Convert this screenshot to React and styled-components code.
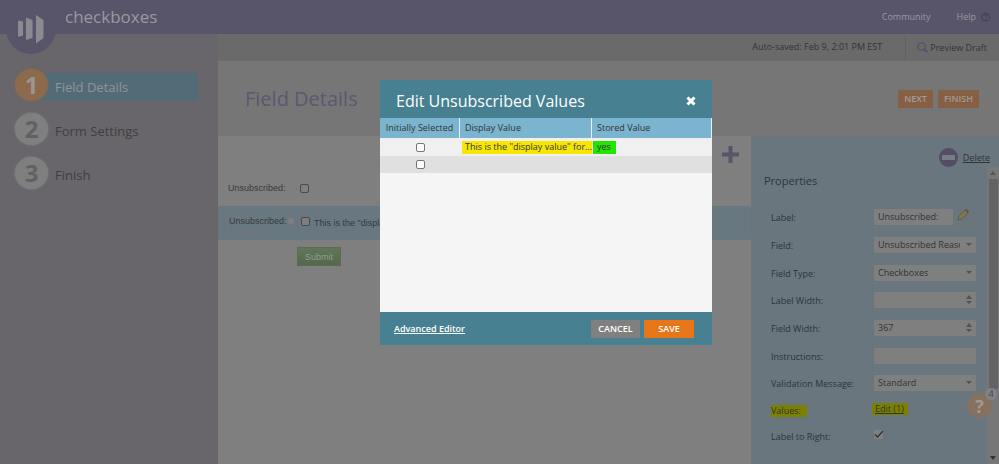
import React from "react";
import styled, { createGlobalStyle } from "styled-components";

const sans = '"Open Sans", "Noto Sans", sans-serif';
const arial = '"Liberation Sans", Arial, sans-serif';

const GlobalStyle = createGlobalStyle`
  *, *::before, *::after { box-sizing: border-box; }
  body { margin: 0; background: #7f7f80; font: 11px/16px ${sans}; color: #38393b; }
  button, input, select { font: inherit; color: inherit; margin: 0; border: 0; padding: 0; border-radius: 0; }
  a { color: inherit; }
  svg { display: block; flex: none; }
  h1, h2, h3, ol { margin: 0; padding: 0; font-weight: 400; list-style: none; }
`;

const Page = styled.div`
  position: relative;
  min-height: 100vh;
  display: flex;
  flex-direction: column;
  overflow: hidden;
`;

const TopBar = styled.header`
  position: relative;
  display: flex;
  align-items: center;
  height: 34px;
  padding: 0 9px 0 65px;
  background: #58546a;
  color: #9a99a0;
`;

const Logo = styled.svg`
  position: absolute;
  left: 6px;
  top: 0;
`;

const AppTitle = styled.h1`
  flex: 1;
  font-size: 17px;
  line-height: 32px;
`;

const TopLink = styled.a`
  display: flex;
  align-items: center;
  gap: 5px;
  margin-left: 26px;
  font-size: 9px;
  text-decoration: none;
`;

const Columns = styled.div`
  flex: 1;
  display: flex;
`;

const Sidebar = styled.nav`
  flex: 0 0 218px;
  padding: 35px 20px 0 15px;
  background: #68666a;
`;

const Steps = styled.ol`
  display: grid;
  gap: 12px;
`;

const Step = styled.li`
  display: flex;
  height: 32px;
  align-items: flex-end;
`;

const StepNumber = styled.span`
  z-index: 1;
  flex: none;
  width: 33px;
  height: 32px;
  border-radius: 50%;
  text-align: center;
  font-size: 24px;
  font-weight: 700;
  line-height: 32px;
  background: ${(p) => (p.$active ? "#8c6a4b" : "#7f7f80")};
  color: ${(p) => (p.$active ? "#9b9692" : "#616162")};
  box-shadow: 0 0 2px ${(p) => (p.$active ? "#8c6a4b" : "#8a8a8b")};
`;

const StepLink = styled.a`
  flex: 1;
  margin-left: -16px;
  padding-left: 23px;
  font-size: 13px;
  line-height: 28px;
  text-decoration: none;
  background: ${(p) => (p.$active ? "#536b77" : "transparent")};
  color: ${(p) => (p.$active ? "#8d969a" : "#3f3e40")};
`;

const Main = styled.main`
  flex: 1;
  min-width: 0;
  display: flex;
  flex-direction: column;
`;

const StatusBar = styled.div`
  display: flex;
  justify-content: flex-end;
  height: 27px;
  line-height: 25px;
  font-size: 9px;
  background: #6a6a6b;
  color: #343436;
`;

const PreviewLink = styled.a`
  display: flex;
  align-items: center;
  gap: 2px;
  margin-left: 23px;
  padding: 0 12px 0 11px;
  height: 27px;
  border-left: 1px solid #626263;
  text-decoration: none;
`;

const TitleBar = styled.div`
  display: flex;
  align-items: center;
  gap: 5px;
  height: 75px;
  padding: 0 20px 0 27px;
  background: #767677;
`;

const PageTitle = styled.h2`
  flex: 1;
  font-size: 20px;
  line-height: 28px;
  color: #5b5870;
`;

const ActionButton = styled.button`
  height: 18px;
  padding: 0 6px;
  font-size: 9px;
  font-weight: 600;
  line-height: 17px;
  background: #865f44;
  color: #a39b95;
`;

const Workspace = styled.div`
  flex: 1;
  display: flex;
`;

const Canvas = styled.section`
  flex: 1;
  min-width: 0;
  display: flex;
  flex-direction: column;
  background: #7f7f80;
  font-family: ${arial};
  font-size: 9px;
`;

const CanvasTools = styled.div`
  display: flex;
  justify-content: flex-end;
  height: 36px;
  padding: 10px 12px 0 0;
`;

const IconButton = styled.button`
  width: 17px;
  height: 17px;
  background: none;
`;

const FormRow = styled.div`
  display: flex;
  align-items: flex-start;
  height: 34px;
  padding: ${(p) => (p.$selected ? "7px 6px 0 6px" : "8px 10px 0 10px")};
  background: ${(p) => (p.$selected ? "#687880" : "transparent")};
`;

const PlainLabel = styled.label`
  flex: none;
  width: 67px;
  line-height: 17px;
`;

const DashedLabel = styled.span`
  flex: none;
  width: 67px;
  height: 18px;
  padding-left: 4px;
  line-height: 15px;
  border: 1px dashed #7a6c72;
`;

const DragDot = styled.span`
  flex: none;
  z-index: 1;
  width: 6px;
  height: 6px;
  margin: 5px 3px 0 -3px;
  border-radius: 50%;
  background: #827e80;
`;

const DashedField = styled.label`
  flex: 1;
  display: flex;
  align-items: flex-start;
  gap: 4px;
  height: 21px;
  padding: 3px;
  line-height: 12px;
  white-space: nowrap;
  border: 1px dashed #7a6c72;
`;

const Tick = styled.input`
  appearance: none;
  flex: none;
  width: 9px;
  height: 9px;
  border: 1px solid ${(p) => (p.$bright ? "#767676" : "#4a4a4b")};
  border-radius: 2px;
  background: ${(p) => (p.$bright ? "#ffffff" : "#7f7f80")};
`;

const RowTick = styled(Tick)`
  margin: 4px 0 0 5px;
`;

const SubmitButton = styled.button`
  align-self: flex-start;
  width: 44px;
  height: 19px;
  margin: 7px 0 0 79px;
  background: linear-gradient(#62755a, #53694a);
  border: 1px solid #5a6c52;
  color: #969b93;
`;

const Panel = styled.aside`
  flex: 0 0 248px;
  display: flex;
  flex-direction: column;
  background: #69767e;
  color: #2f3437;
`;

const PanelHeader = styled.div`
  display: flex;
  justify-content: flex-end;
  align-items: flex-end;
  height: 31px;
  padding-right: 9px;
`;

const DeleteLink = styled.a`
  display: flex;
  align-items: center;
  gap: 5px;
  font-size: 9px;
`;

const PanelBody = styled.div`
  flex: 1;
  display: flex;
`;

const Properties = styled.form`
  flex: 1;
  padding-left: 13px;
`;

const PanelTitle = styled.h3`
  height: 42px;
  padding-top: 6px;
  font-size: 11px;
  line-height: 16px;
`;

const Fields = styled.div`
  display: grid;
  grid-template-columns: 96px 102px;
  grid-template-rows: repeat(2, 28px 28px 27px) 27px 26px 27px;
  column-gap: 7px;
  padding-left: 7px;
  font-size: 9px;
`;

const FieldLabel = styled.label`
  padding-top: 1px;
  line-height: 16px;
  white-space: nowrap;
`;

const Control = styled.div`
  position: relative;
  display: flex;
  align-items: flex-start;
  gap: 4px;
`;

const TextInput = styled.input`
  width: ${(p) => (p.$short ? "79px" : "100%")};
  height: 16px;
  padding-left: 4px;
  background: #7f7f80;
  appearance: none;
`;

const Select = styled.select`
  width: 100%;
  height: 16px;
  padding: 0 16px 0 4px;
  appearance: none;
  overflow: hidden;
  background: #7f7f80;
`;

const Arrows = styled.svg`
  position: absolute;
  right: 4px;
  top: 3px;
  pointer-events: none;
`;

const Marked = styled.span`
  display: inline-block;
  height: ${(p) => (p.$tall ? "13px" : "12px")};
  line-height: 12px;
  padding: ${(p) => p.$pad || "0"};
  background: ${(p) => p.$tone || "#7c8000"};
`;

const ValuesLink = styled.a`
  margin-left: -2px;
  line-height: 14px;
  text-decoration: none;

  ${Marked} { text-decoration: underline; }
`;

const CheckBoxed = styled.span`
  position: relative;
  display: block;
  padding-top: 2px;
  svg { position: absolute; left: 0; top: 2px; pointer-events: none; }
`;

const FlatTick = styled.input`
  display: block;
  appearance: none;
  width: 9px;
  height: 9px;
  background: #808081;
`;

const ScrollTrack = styled.div`
  display: flex;
  flex-direction: column;
  align-items: center;
  width: 12px;
  background: #777778;
`;

const ScrollThumb = styled.div`
  width: 9px;
  height: 210px;
  margin-bottom: auto;
  background: #636364;
`;

const HelpBubble = styled.button`
  position: absolute;
  right: 7px;
  top: 393px;
  width: 25px;
  height: 25px;
  border-radius: 50%;
  background: #86705f;
  color: #a09a95;
  font-size: 18px;
  font-weight: 700;
  line-height: 24px;
`;

const HelpCount = styled.span`
  position: absolute;
  right: -5px;
  top: -5px;
  width: 12px;
  height: 12px;
  border-radius: 50%;
  background: #808285;
  color: #444649;
  font-size: 9px;
  font-weight: 400;
  line-height: 12px;
`;

const Dialog = styled.div`
  position: absolute;
  left: 380px;
  top: 80px;
  width: 332px;
  color: #333;
  background: #f5f5f5;
`;

const DialogHeader = styled.div`
  display: flex;
  align-items: center;
  justify-content: space-between;
  height: 38px;
  padding: 3px 16px 0 16px;
  background: #468091;
  color: #fff;
`;

const DialogTitle = styled.h2`
  font-size: 16px;
  line-height: 24px;
`;

const CloseButton = styled.button`
  padding: 0;
  background: none;
`;

const TableArea = styled.div`
  height: 194px;
`;

const ValuesTable = styled.table`
  width: 100%;
  table-layout: fixed;
  border-collapse: separate;
  border-spacing: 0;
  font-size: 9px;
  line-height: 13px;
`;

const HeadCell = styled.th`
  height: 20px;
  width: ${(p) => p.$width || "auto"};
  padding: 0 0 1px ${(p) => (p.$center ? "0" : "5px")};
  font-weight: 400;
  white-space: nowrap;
  text-align: ${(p) => (p.$center ? "center" : "left")};
  background: #7ab4ce;
  border-right: 1px solid #e4f1f6;
`;

const Row = styled.tr`
  height: ${(p) => (p.$alt ? "17px" : "18px")};
  background: ${(p) => (p.$alt ? "#e0e0e0" : "#f0f0f0")};
`;

const Cell = styled.td`
  padding: 0 0 0 ${(p) => p.$left || "0"};
  vertical-align: middle;
  white-space: nowrap;
`;

const CellTick = styled(Tick)`
  display: block;
  margin: 0 auto;
`;

const DialogFooter = styled.div`
  display: flex;
  align-items: center;
  gap: 4px;
  height: 33px;
  padding: 0 18px 0 14px;
  background: #468091;
  color: #fff;
  font-size: 9px;
  font-weight: 600;
`;

const AdvancedLink = styled.a`
  margin-right: auto;
`;

const DialogButton = styled.button`
  width: ${(p) => (p.$primary ? "50px" : "49px")};
  height: 18px;
  line-height: 17px;
  background: ${(p) => (p.$primary ? "#e77619" : "#808080")};
`;

const steps = ["Field Details", "Form Settings", "Finish"];

function SelectField({ id, value }) {
  return (
    <Control>
      <Select id={id} defaultValue={value}>
        <option>{value}</option>
      </Select>
      <Arrows width="7" height="10" viewBox="0 0 7 10">
        <path d="M1 3h6L4 6z" fill="#505356" />
      </Arrows>
    </Control>
  );
}

function SpinField({ id, value }) {
  return (
    <Control>
      <TextInput id={id} defaultValue={value} />
      <Arrows width="7" height="10" viewBox="0 0 7 10">
        <path d="M1 4l3-4 3 4zM1 6h6L4 9z" fill="#505356" />
      </Arrows>
    </Control>
  );
}

export default function App() {
  return (
    <Page>
      <GlobalStyle />
      <TopBar>
        <Logo width="50" height="54" viewBox="0 0 50 54">
          <circle cx="25" cy="29" r="25" fill="#58546a" />
          <path d="M12 20.5l5 1v14l-5 1.500zM20 17.500l6.500 2.500v18L20 40zM30 15l7.500 5v18L30 43.500z" fill="#8b8a91" />
        </Logo>
        <AppTitle>checkboxes</AppTitle>
        <TopLink href="#community">Community</TopLink>
        <TopLink href="#help">
          Help
          <svg width="9" height="10" viewBox="0 0 9 10" fill="none" stroke="#42404d">
            <circle cx="4.5" cy="5" r="4" />
            <path d="M3 4c0-2 3-2 3 0 0 1-1.500 1-1.500 2M4.500 7v1" />
          </svg>
        </TopLink>
      </TopBar>
      <Columns>
        <Sidebar>
          <Steps>
            {steps.map((name, i) => (
              <Step key={name}>
                <StepNumber $active={i === 0}>{i + 1}</StepNumber>
                <StepLink href={`#step-${i + 1}`} $active={i === 0}>{name}</StepLink>
              </Step>
            ))}
          </Steps>
        </Sidebar>
        <Main>
          <StatusBar>
            <span>Auto-saved: Feb 9, 2:01 PM EST</span>
            <PreviewLink href="#preview">
              <svg width="11" height="11" viewBox="0 0 11 11" fill="none" stroke="#555168">
                <circle cx="4.500" cy="4.500" r="3.700" strokeWidth="1.300" />
                <path d="M7.300 7.300l3 3" strokeWidth="2" />
              </svg>
              Preview Draft
            </PreviewLink>
          </StatusBar>
          <TitleBar>
            <PageTitle>Field Details</PageTitle>
            <ActionButton type="button">NEXT</ActionButton>
            <ActionButton type="button">FINISH</ActionButton>
          </TitleBar>
          <Workspace>
            <Canvas>
              <CanvasTools>
                <IconButton type="button" aria-label="Add field">
                  <svg width="17" height="17" viewBox="0 0 17 17">
                    <path d="M8.500 0v17M0 8.500h17" stroke="#58546a" strokeWidth="4" />
                  </svg>
                </IconButton>
              </CanvasTools>
              <FormRow>
                <PlainLabel htmlFor="unsub-1">Unsubscribed:</PlainLabel>
                <RowTick type="checkbox" id="unsub-1" />
              </FormRow>
              <FormRow $selected>
                <DashedLabel>Unsubscribed:</DashedLabel>
                <DragDot />
                <DashedField>
                  <Tick type="checkbox" />
                  This is the "display value" for the checkbox
                </DashedField>
              </FormRow>
              <SubmitButton type="button">Submit</SubmitButton>
            </Canvas>
            <Panel>
              <PanelHeader>
                <DeleteLink href="#delete">
                  <svg width="19" height="19" viewBox="0 0 19 19">
                    <circle cx="9.500" cy="9.500" r="9.500" fill="#514e65" />
                    <rect x="3" y="7" width="13" height="5" fill="#777b87" />
                  </svg>
                  Delete
                </DeleteLink>
              </PanelHeader>
              <PanelBody>
                <Properties>
                  <PanelTitle>Properties</PanelTitle>
                  <Fields>
                    <FieldLabel htmlFor="label">Label:</FieldLabel>
                    <Control>
                      <TextInput id="label" defaultValue="Unsubscribed:" $short />
                      <svg width="12" height="12" viewBox="0 0 12 12">
                        <path d="M1 11l1-4 6-6 3 3-6 6z" fill="#82774b" stroke="#51492f" strokeWidth=".6" />
                        <path d="M8 1l1-1 3 2-1 2z" fill="#744748" />
                      </svg>
                    </Control>
                    <FieldLabel htmlFor="field">Field:</FieldLabel>
                    <SelectField id="field" value="Unsubscribed Reason" />
                    <FieldLabel htmlFor="type">Field Type:</FieldLabel>
                    <SelectField id="type" value="Checkboxes" />
                    <FieldLabel htmlFor="lwidth">Label Width:</FieldLabel>
                    <SpinField id="lwidth" value="" />
                    <FieldLabel htmlFor="fwidth">Field Width:</FieldLabel>
                    <SpinField id="fwidth" value="367" />
                    <FieldLabel htmlFor="instr">Instructions:</FieldLabel>
                    <Control><TextInput id="instr" /></Control>
                    <FieldLabel htmlFor="valid">Validation Message:</FieldLabel>
                    <SelectField id="valid" value="Standard" />
                    <FieldLabel as="span"><Marked $pad="0 6px 0 0">Values:</Marked></FieldLabel>
                    <Control>
                      <ValuesLink href="#values"><Marked $pad="0 4px 0 3px">Edit (1)</Marked></ValuesLink>
                    </Control>
                    <FieldLabel htmlFor="right">Label to Right:</FieldLabel>
                    <CheckBoxed>
                      <FlatTick id="right" type="checkbox" defaultChecked />
                      <svg width="10" height="9" viewBox="0 0 10 9">
                        <path d="M1 4.500l2.500 2.500L9 1" fill="none" stroke="#333" strokeWidth="1.400" />
                      </svg>
                    </CheckBoxed>
                  </Fields>
                </Properties>
                <ScrollTrack>
                  <svg width="12" height="12" viewBox="0 0 12 12"><path d="M3 8l3-4 3 4z" fill="#555" /></svg>
                  <ScrollThumb />
                  <svg width="12" height="12" viewBox="0 0 12 12"><path d="M3 4h6L6 8z" fill="#333" /></svg>
                </ScrollTrack>
              </PanelBody>
            </Panel>
          </Workspace>
        </Main>
      </Columns>
      <HelpBubble type="button" aria-label="Help, 4 items">
        ?<HelpCount>4</HelpCount>
      </HelpBubble>
      <Dialog role="dialog" aria-labelledby="dialog-title">
        <DialogHeader>
          <DialogTitle id="dialog-title">Edit Unsubscribed Values</DialogTitle>
          <CloseButton type="button" aria-label="Close">
            <svg width="10" height="10" viewBox="0 0 10 10">
              <path d="M1.500 1.500l7 7M8.500 1.500l-7 7" stroke="#fff" strokeWidth="3" />
            </svg>
          </CloseButton>
        </DialogHeader>
        <TableArea>
          <ValuesTable>
            <thead>
              <tr>
                <HeadCell $width="80px" $center>Initially Selected</HeadCell>
                <HeadCell $width="132px">Display Value</HeadCell>
                <HeadCell>Stored Value</HeadCell>
              </tr>
            </thead>
            <tbody>
              <Row>
                <Cell><CellTick type="checkbox" aria-label="Initially selected: yes" $bright /></Cell>
                <Cell $left="2px">
                  <Marked $tall $tone="#f7e600" $pad="0 0 0 3px">This is the "display value" for...</Marked>
                </Cell>
                <Cell $left="1px">
                  <Marked $tall $tone="#22e600" $pad="0 5px 0 4px">yes</Marked>
                </Cell>
              </Row>
              <Row $alt>
                <Cell><CellTick type="checkbox" aria-label="Initially selected: new value" $bright /></Cell>
                <Cell />
                <Cell />
              </Row>
            </tbody>
          </ValuesTable>
        </TableArea>
        <DialogFooter>
          <AdvancedLink href="#advanced">Advanced Editor</AdvancedLink>
          <DialogButton type="button">CANCEL</DialogButton>
          <DialogButton type="button" $primary>SAVE</DialogButton>
        </DialogFooter>
      </Dialog>
    </Page>
  );
}
